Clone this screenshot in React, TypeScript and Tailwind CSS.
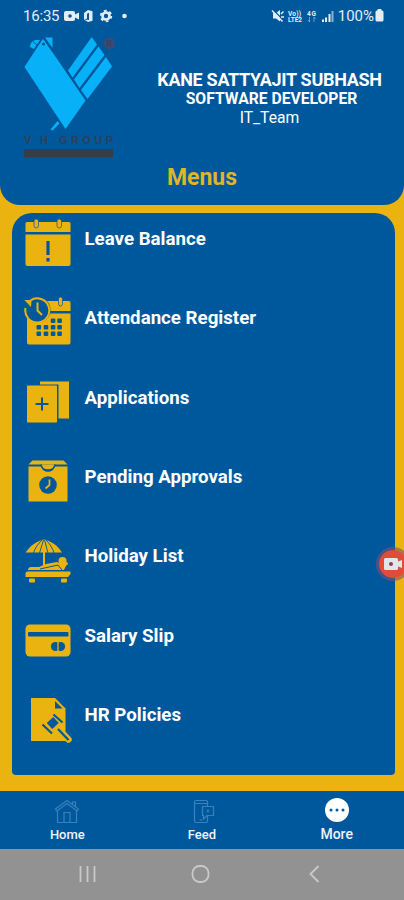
import React from 'react';

interface MenuItem {
    label: string;
    icon: React.ReactNode;
}

const BLUE = '#00589c';
const GOLD = '#ebb30f';

const LeaveIcon = () => (
    <>
        <path d="M3 9H45a1.5 1.5 0 0 1 1.500 1.500V19H1.500V10.500A1.500 1.500 0 0 1 3 9Z" />
        <path d="M1.500 21.500H46.500V51a2 2 0 0 1-2 2H3.500a2 2 0 0 1-2-2Z" />
        <g stroke={BLUE} strokeWidth=".7">
            <rect x="10" y="6" width="4.500" height="9" rx="2.250" />
            <rect x="33" y="6" width="4.500" height="9" rx="2.250" />
        </g>
        <path d="M24 28V42M24 45V48.500" stroke={BLUE} strokeWidth="3.200" />
    </>
);

const AttendanceIcon = () => (
    <>
        <path d="M8 9H45a1.500 1.500 0 0 1 1.500 1.500V19H22V21.500H46.500V50.500a2 2 0 0 1-2 2H5a2 2 0 0 1-2-2V24Z" />
        <rect x="34.500" y="5" width="4" height="9" rx="2" stroke={BLUE} strokeWidth=".7" />
        <circle cx="13.500" cy="18" r="13" fill={BLUE} />
        <path d="M6.500 8.500A12 12 0 1 1 1.500 16" fill="none" stroke={GOLD} strokeWidth="2" />
        <path d="M.5 8L7.500 8L7 15Z" />
        <path d="M13.500 10.500V18.500L18 23" fill="none" stroke={GOLD} strokeWidth="2" />
        <g fill={BLUE}>
            {[29, 35.500, 42].map((y) =>
                [12.500, 19.700, 26.800, 33.300].map((x) =>
                    y === 29 && x < 26 ? null : <rect key={`${x}-${y}`} x={x} y={y - 2.500} width="4.600" height="4.600" rx="1" />
                )
            )}
        </g>
    </>
);

const ApplicationsIcon = () => (
    <>
        <path d="M16 9.500H45V46.500H34.500V12.500H16Z" />
        <rect x="3" y="13.500" width="30" height="37" rx=".8" />
        <path d="M18 25.500V38.500M11.500 32H24.500" stroke={BLUE} strokeWidth="2" />
    </>
);

const PendingIcon = () => (
    <>
        <path d="M8.500 9.500H39.500L43.500 13.500H4.500Z" />
        <path d="M4.500 15.500H17.500C18 22.500 30 22.500 30.500 15.500H43.500V50.500H4.500Z" />
        <path d="M17 13.500C18 21 30 21 31 13.500" fill={GOLD} stroke={BLUE} strokeWidth="1.800" />
        <circle cx="24" cy="34" r="8.800" fill={BLUE} />
        <path d="M25.500 28.500V34L21.500 37.500" fill="none" stroke={GOLD} strokeWidth="1.800" />
    </>
);

const HolidayIcon = () => (
    <>
        <path d="M1.500 22.500C6 16 12 11.500 20 9.500C28 11.500 34 16 38 22.500Z" />
        <path d="M18 10C14 14 11 18 9.500 23M22 10C26 14 28.500 18 30 23M19.500 10L15.500 23M20.500 10L24 23" fill="none" stroke={BLUE} strokeWidth=".9" />
        <path d="M20 22V36" stroke={GOLD} strokeWidth="2" />
        <circle cx="38.500" cy="31" r="4" />
        <path d="M4 39L6 37H15L22 34L33 32L37 34L43 32L44 34L40 40H4Z" />
        <path d="M16 39L34 35L38 40M43 35L40 41" fill="none" stroke={BLUE} strokeWidth="1" />
        <path d="M3 41.500H46.500V44L44 47H1.500V43Z" />
        <rect x="5" y="48.500" width="6" height="4" rx="1" />
        <rect x="37" y="48.500" width="6" height="4" rx="1" />
    </>
);

const SalaryIcon = () => (
    <>
        <rect x="1.500" y="14.500" width="45" height="32" rx="4.500" />
        <rect x="4" y="22" width="40.500" height="4.500" rx="1" fill={BLUE} />
        <circle cx="31.500" cy="36.500" r="4.600" fill={BLUE} />
        <circle cx="36.500" cy="36.500" r="4.600" fill={BLUE} />
        <path d="M34 32V41" stroke={GOLD} strokeWidth="1.300" />
    </>
);

const PoliciesIcon = () => (
    <>
        <path d="M7 9H31L41.500 19.500V52H7Z" />
        <path d="M31 12V19.500H38.500Z" fill={BLUE} />
        <path d="M35 40.500L44.500 50.500" stroke={GOLD} strokeWidth="6.500" strokeLinecap="round" />
        <g stroke={BLUE} fill="none">
            <path d="M29.500 25.500L38.500 33.500M18.500 35.500L28 44.500" strokeWidth="2.200" />
            <path d="M25.500 37L32 31" strokeWidth="8" />
            <path d="M34 40L44.500 51" strokeWidth="2.200" />
        </g>
    </>
);

const menuItems: MenuItem[] = [
    { label: 'Leave Balance', icon: <LeaveIcon /> },
    { label: 'Attendance Register', icon: <AttendanceIcon /> },
    { label: 'Applications', icon: <ApplicationsIcon /> },
    { label: 'Pending Approvals', icon: <PendingIcon /> },
    { label: 'Holiday List', icon: <HolidayIcon /> },
    { label: 'Salary Slip', icon: <SalaryIcon /> },
    { label: 'HR Policies', icon: <PoliciesIcon /> },
];

const StatusBar: React.FC = () => (
    <div className="flex h-8 items-center justify-between pl-[23px] pr-[20px] text-sm text-[#e4edf6]">
        <div className="flex items-center">
            <span className="w-[37px] pt-px text-[15px] tracking-[-0.2px]">16:35</span>
            <svg width="70" height="14" viewBox="0 0 70 14" className="ml-1" fill="currentColor">
                <rect x="0" y="2" width="11" height="10" rx="2" />
                <path d="M10 6L15 3.500V10.500L10 8Z" />
                <circle cx="6" cy="7" r="1.800" fill={BLUE} />
                <path d="M24 1L28.500 2.200V11.800L24 13L20 10.500L25 11V3.800L23 4.800V9.500L20 10.500V4Z" />
                <circle cx="42" cy="7" r="3.500" fill="none" stroke="currentColor" strokeWidth="2.600" />
                <circle cx="42" cy="7" r="5.300" fill="none" stroke="currentColor" strokeWidth="1.800" strokeDasharray="2.775 2.775" />
                <circle cx="60.500" cy="7" r="2.300" />
            </svg>
        </div>
        <div className="flex items-center">
            <svg width="64" height="16" viewBox="0 0 64 16" className="mr-[3px]" fill="currentColor">
                <path d="M2 5H5L9 2V13.500L5 10.500H2Z" />
                <path d="M2 1.500L13 13" stroke={BLUE} strokeWidth="1.200" />
                <path d="M1 2.500L11.500 13.500M10 6L12.500 3.500M10 9H13" stroke="currentColor" strokeWidth="1.500" />
                <g fontSize="6.500" fontWeight="700">
                    <text x="17" y="7.500" textLength="13">Vo))</text>
                    <text x="17" y="14" textLength="14">LTE2</text>
                    <text x="36" y="7.500" textLength="9">4G</text>
                </g>
                <path d="M38.500 9V14M37 12L38.500 14M43 14V9M44.500 11L43 9" stroke="currentColor" strokeWidth=".9" opacity=".5" fill="none" />
                <path d="M51 14V11.500H53V14ZM54 14V9.500H56V14ZM57.500 14V6H59.500V14Z" />
                <path d="M60.500 14V3H62.500V14Z" opacity=".6" />
            </svg>
            <span className="pt-px text-[15px]">100%</span>
            <svg width="9" height="13" viewBox="0 0 9 13" className="ml-px" fill="currentColor">
                <rect x="2.500" y="0" width="4" height="3" rx=".8" />
                <rect x=".5" y="1.500" width="8" height="11" rx="1.500" />
            </svg>
        </div>
    </div>
);

const Logo: React.FC = () => (
    <svg width="94" height="124" viewBox="22 36 94 124" className="shrink-0">
        <g fill="#08b0f8">
            <path d="M43 38.500L85.500 100.500L65.500 129L24.500 67Z" />
            <path d="M91.700 37L97 44.500L72.500 77.500L68 70.500Z" />
            <path d="M98.500 46.500L104.500 55L79.500 88L74 79.500Z" />
            <path d="M106 57L112 66.500L87.500 99L81 90Z" />
            <path d="M40 40H35Q30 42 30 47L34 49Z" />
            <path d="M45 37.500H52.500V48Z" />
            <path d="M57.500 121L59.500 123.500L52.500 130.500L50.500 129.500Z" />
        </g>
        <path d="M34 50L43 38L53 52" fill="none" stroke={BLUE} strokeWidth="1" />
        <path d="M33 41.500L37 45" fill="none" stroke={BLUE} strokeWidth="1" />
        <circle cx="43.500" cy="44" r="1.600" fill={BLUE} />
        <circle cx="109.500" cy="43.500" r="6" fill="#304d7c" />
        <text x="106.500" y="47" fontSize="9" fontWeight="700" fill="#443f58">R</text>
        <g fontSize="11" fontWeight="700" fill="#2b4059" fontFamily="Liberation Sans">
            <text x="24" y="144">V</text>
            <text x="40" y="144">H</text>
            <text x="59" y="144" textLength="54">GROUP</text>
        </g>
        <rect x="24" y="149" width="89" height="8.500" fill="#383c45" />
    </svg>
);

const TabBar: React.FC = () => (
    <nav className="grid h-[58px] grid-cols-3 bg-[#00589c] text-[13px] font-medium leading-4 text-[#edf3fb]">
        <div className="flex flex-col items-center pt-2">
            <svg width="26" height="26" viewBox="0 0 26 26" fill="none" stroke="#3981bc" strokeWidth="1.200">
                <path d="M1.500 10L13 1.500L24.500 10L23 12L13 4.500L3 12ZM3.500 11.500V23.500H22.500V11.500M18.500 5.500V3H21.500V7.500M10 23V13.500H16V23" />
            </svg>
            <span className="mt-0.5">Home</span>
        </div>
        <div className="flex flex-col items-center pt-2">
            <svg width="26" height="26" viewBox="0 0 26 26" fill="none" stroke="#3981bc" strokeWidth="1.200">
                <path d="M18.500 7V3Q18.500 1.500 17 1.500H7Q5.500 1.500 5.500 3V22Q5.500 23.500 7 23.500H17Q18.500 23.500 18.500 22V17M5.500 4.500H18.500M10.500 21H13.500" />
                <path d="M13.500 7.500H24.500V16.500H18L14.500 20V16.500H13.500Z" />
                <path d="M17.500 12H20.500M19 10.500V13.500" />
            </svg>
            <span className="mt-0.5">Feed</span>
        </div>
        <div className="flex flex-col items-center pt-[7px] text-[14px]">
            <svg width="26" height="26" viewBox="0 0 26 26">
                <circle cx="13" cy="12" r="12" fill="#fff" />
                <g fill={BLUE}>
                    <circle cx="7" cy="12" r="1.500" />
                    <circle cx="13" cy="12" r="1.500" />
                    <circle cx="19" cy="12" r="1.500" />
                </g>
            </svg>
            <span className="mt-0.5">More</span>
        </div>
    </nav>
);

const SystemNav: React.FC = () => (
    <div className="grid h-[51px] grid-cols-[88px_112px_1fr] bg-[#929292]">
        <svg width="20" height="20" viewBox="0 0 20 20" className="ml-[78px] mt-[15px]" stroke="#c9c9c9" strokeWidth="1.800">
            <path d="M2.500 2V18M9.500 2V18M16.500 2V18" />
        </svg>
        <svg width="20" height="20" viewBox="0 0 20 20" className="ml-[103px] mt-[15px]" fill="none" stroke="#c9c9c9" strokeWidth="1.800">
            <rect x="1.500" y="2" width="16" height="16" rx="7" />
        </svg>
        <svg width="20" height="20" viewBox="0 0 20 20" className="ml-[104px] mt-[15px]" fill="none" stroke="#c9c9c9" strokeWidth="1.800">
            <path d="M14.500 2L6.500 10L14.500 18" />
        </svg>
    </div>
);

const App: React.FC = () => {
    return (
        <div className="relative flex h-[900px] w-[404px] flex-col overflow-hidden bg-[#ebb30f] font-['Roboto',sans-serif]">
            <header className="h-[205px] shrink-0 rounded-b-[20px] bg-[#00589c]">
                <StatusBar />
                <div className="flex h-[132px] pl-[22px] pt-1">
                    <Logo />
                    <div className="ml-[19px] w-[269px] pt-[33px] text-center text-white">
                        <h1 className="whitespace-nowrap text-[18px] font-bold leading-[21px] tracking-[-0.3px]">KANE SATTYAJIT SUBHASH</h1>
                        <p className="ml-1 text-[15.700px] font-bold leading-[18px]">SOFTWARE DEVELOPER</p>
                        <p className="text-[15.700px] leading-[20px]">IT_Team</p>
                    </div>
                </div>
                <h2 className="text-center text-[23px] font-bold leading-[28px] text-[#dfb52a]">Menus</h2>
            </header>

            <main className="ml-3 mr-[9px] mt-2 h-[562px] shrink-0 rounded-b-[4px] rounded-t-[20px] bg-[#00589c]">
                {menuItems.map((item) => (
                    <div key={item.label} className="flex h-[79.33px] pl-3">
                        <svg width="48" height="60" viewBox="0 0 48 60" className="shrink-0" fill={GOLD}>
                            {item.icon}
                        </svg>
                        <span className="ml-[12.500px] pt-[14px] text-[18.700px] font-bold leading-6 text-white">{item.label}</span>
                    </div>
                ))}
            </main>

            <div className="mt-auto">
                <TabBar />
                <SystemNav />
            </div>

            {/* floating screen recorder handle */}
            <div className="absolute left-[376px] top-[547px] flex size-[34px] items-center justify-center rounded-full border-3 border-[#804f78]/60 bg-[#df4d38] bg-clip-padding">
                <svg width="18" height="14" viewBox="0 0 18 14" fill="#e3e5ec">
                    <rect x="0" y="1" width="14" height="12" rx="1.500" />
                    <path d="M13 5L18 3V11L13 9Z" />
                    <circle cx="7" cy="7" r="2" fill="#804550" />
                </svg>
            </div>
        </div>
    );
};

export default App;
